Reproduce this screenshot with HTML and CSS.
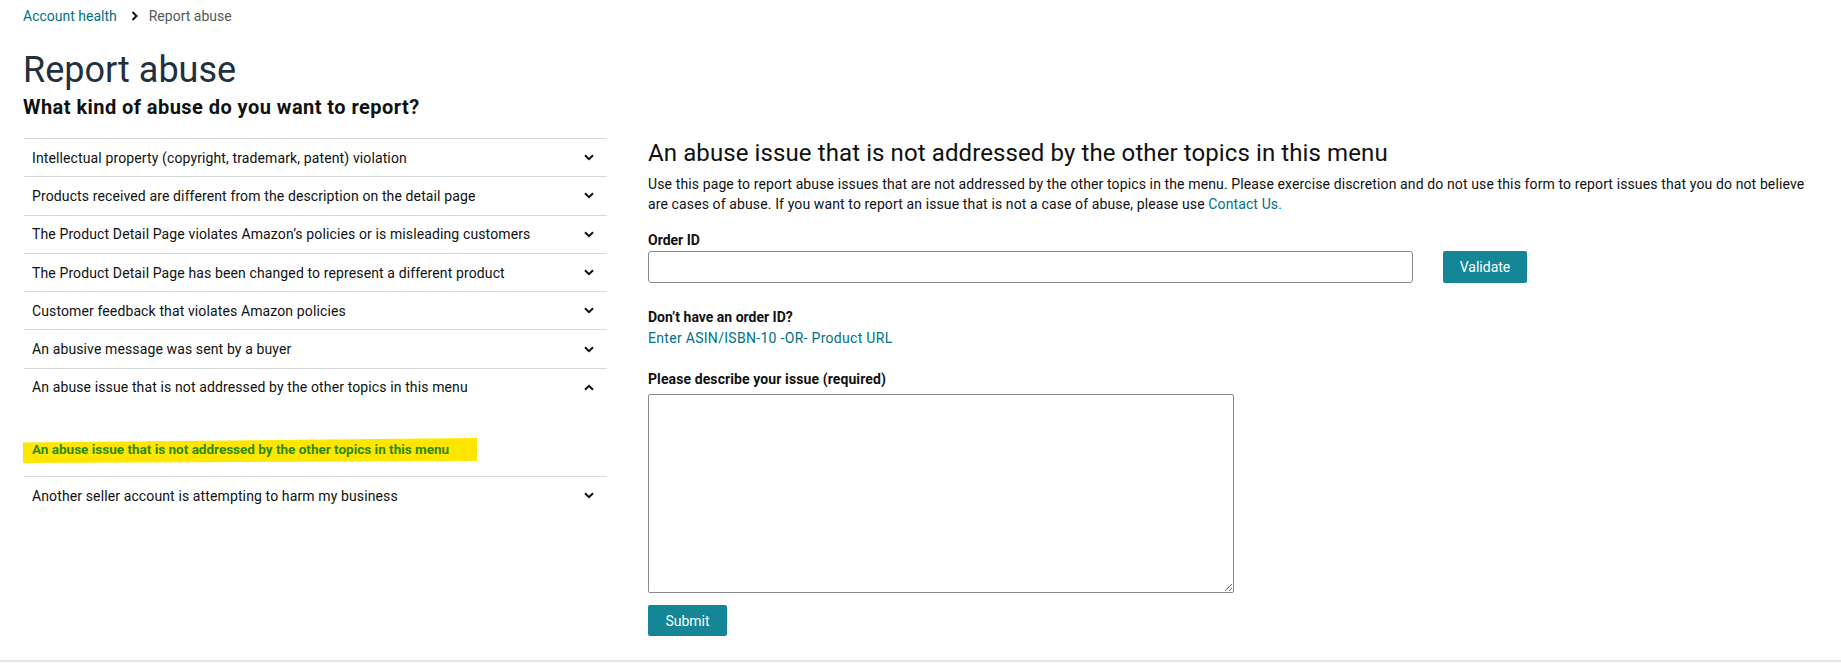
FILE: index.html
```html
<!DOCTYPE html>
<html lang="en">
<head>
<meta charset="utf-8">
<title>Report abuse</title>
<link rel="stylesheet" href="styles.css">
</head>
<body>
<div class="page">
  <nav class="crumbs">
    <a class="crumb-link" href="#">Account health</a>
    <svg class="crumb-sep" width="8" height="10" viewBox="0 0 8 10"><path d="M1.5 1 L5.5 5 L1.5 9" fill="none" stroke="#0f1111" stroke-width="2"/></svg>
    <span class="crumb-current">Report abuse</span>
  </nav>
  <h1 class="title">Report abuse</h1>
  <h2 class="subtitle">What kind of abuse do you want to report?</h2>

  <div class="main">
    <div class="topics">
      <div class="topic"><span>Intellectual property (copyright, trademark, patent) violation</span><svg class="chev" width="10" height="7" viewBox="0 0 10 7"><path d="M1 1.2 L5 5.2 L9 1.2" fill="none" stroke="#0f1111" stroke-width="2"/></svg></div>
      <div class="topic"><span>Products received are different from the description on the detail page</span><svg class="chev" width="10" height="7" viewBox="0 0 10 7"><path d="M1 1.2 L5 5.2 L9 1.2" fill="none" stroke="#0f1111" stroke-width="2"/></svg></div>
      <div class="topic"><span>The Product Detail Page violates Amazon’s policies or is misleading customers</span><svg class="chev" width="10" height="7" viewBox="0 0 10 7"><path d="M1 1.2 L5 5.2 L9 1.2" fill="none" stroke="#0f1111" stroke-width="2"/></svg></div>
      <div class="topic"><span>The Product Detail Page has been changed to represent a different product</span><svg class="chev" width="10" height="7" viewBox="0 0 10 7"><path d="M1 1.2 L5 5.2 L9 1.2" fill="none" stroke="#0f1111" stroke-width="2"/></svg></div>
      <div class="topic"><span>Customer feedback that violates Amazon policies</span><svg class="chev" width="10" height="7" viewBox="0 0 10 7"><path d="M1 1.2 L5 5.2 L9 1.2" fill="none" stroke="#0f1111" stroke-width="2"/></svg></div>
      <div class="topic"><span>An abusive message was sent by a buyer</span><svg class="chev" width="10" height="7" viewBox="0 0 10 7"><path d="M1 1.2 L5 5.2 L9 1.2" fill="none" stroke="#0f1111" stroke-width="2"/></svg></div>
      <div class="topic-group">
        <div class="topic topic-open"><span>An abuse issue that is not addressed by the other topics in this menu</span><svg class="chev" width="10" height="7" viewBox="0 0 10 7"><path d="M1 5.8 L5 1.8 L9 5.8" fill="none" stroke="#0f1111" stroke-width="2"/></svg></div>
        <div class="topic-body">
          <span class="highlight">An abuse issue that is not addressed by the other topics in this menu</span>
        </div>
      </div>
      <div class="topic"><span>Another seller account is attempting to harm my business</span><svg class="chev" width="10" height="7" viewBox="0 0 10 7"><path d="M1 1.2 L5 5.2 L9 1.2" fill="none" stroke="#0f1111" stroke-width="2"/></svg></div>
    </div>

    <div class="detail">
      <h3 class="detail-title">An abuse issue that is not addressed by the other topics in this menu</h3>
      <p class="detail-text">Use this page to report abuse issues that are not addressed by the other topics in the menu. Please exercise discretion and do not use this form to report issues that you do not believe<br>are cases of abuse. If you want to report an issue that is not a case of abuse, please use <a class="link" href="#">Contact Us.</a></p>

      <div class="field-label field-order">Order ID</div>
      <div class="order-row">
        <input class="order-input" type="text">
        <button class="btn btn-validate" type="button">Validate</button>
      </div>

      <div class="field-label field-noorder">Don’t have an order ID?</div>
      <a class="link asin-link" href="#">Enter ASIN/ISBN-10 -OR- Product URL</a>

      <div class="field-label field-describe">Please describe your issue (required)</div>
      <textarea class="describe"></textarea>
      <button class="btn btn-submit" type="button">Submit</button>
    </div>
  </div>
</div>
<div class="footer-line"></div>
</body>
</html>
```

FILE: styles.css
```css
* { box-sizing: border-box; }

body {
  margin: 0;
  font-family: Roboto, "Liberation Sans", Arial, sans-serif;
  color: #0f1111;
  background: #ffffff;
}

.page {
  padding: 0 23px;
}

.crumbs {
  display: flex;
  align-items: center;
  height: 20px;
  margin-top: 6px;
  font-size: 14px;
  line-height: 20px;
}

.crumb-link {
  color: #007185;
  text-decoration: none;
}

.crumb-sep {
  margin: 0 10px 0 14px;
}

.crumb-current {
  color: #565959;
}

.title {
  margin: 22px 0 0;
  font-size: 36px;
  line-height: 44px;
  font-weight: 400;
  color: #232f3e;
}

.subtitle {
  margin: 3px 0 0;
  font-size: 20px;
  line-height: 24px;
  font-weight: 700;
  letter-spacing: 0.45px;
  color: #0f1111;
}

.main {
  display: grid;
  grid-template-columns: 583px 1fr;
  column-gap: 41px;
  margin-top: 19px;
  margin-left: 1px;
}

.topics {
  display: flex;
  flex-direction: column;
}

.topic {
  display: flex;
  align-items: center;
  justify-content: space-between;
  height: 38.3px;
  padding: 0 13px 0 8px;
  border-top: 1px solid #d5d9d9;
  font-size: 14px;
  letter-spacing: 0.12px;
  color: #0f1111;
}

.chev {
  flex: none;
}

.topic-body {
  height: 70px;
  padding-top: 32px;
}

.highlight {
  display: inline-block;
  margin-left: -1px;
  height: 25px;
  padding: 0 28px 0 9px;
  background: #ffe600;
  color: #2b8a12;
  font-size: 13.5px;
  font-weight: 700;
  line-height: 22px;
  clip-path: polygon(0 18%, 100% 0, 100% 92%, 0 100%);
}

.detail {
  display: flex;
  flex-direction: column;
  align-items: flex-start;
}

.detail-title {
  margin: 0;
  font-size: 24px;
  line-height: 30px;
  font-weight: 400;
  letter-spacing: 0.1px;
  color: #0f1111;
}

.detail-text {
  margin: 6px 0 0;
  font-size: 14px;
  line-height: 20px;
  letter-spacing: 0.12px;
  white-space: nowrap;
}

.link {
  color: #007185;
  text-decoration: none;
}

.field-label {
  font-size: 14px;
  line-height: 20px;
  font-weight: 700;
}

.field-order {
  margin-top: 16px;
}

.order-row {
  display: flex;
  align-items: center;
  gap: 30px;
  margin-top: 1px;
}

.order-input {
  width: 765px;
  height: 32px;
  border: 1px solid #888c8c;
  border-radius: 3px;
  font-family: inherit;
  font-size: 14px;
  padding: 0 8px;
}

.btn {
  display: flex;
  align-items: center;
  justify-content: center;
  border: none;
  border-radius: 2px;
  background: #148696;
  color: #ffffff;
  font-family: inherit;
  font-size: 14px;
  padding: 0;
}

.btn-validate {
  width: 84px;
  height: 32px;
}

.field-noorder {
  margin-top: 24px;
}

.asin-link {
  display: block;
  margin-top: 1px;
  font-size: 14px;
  line-height: 20px;
  letter-spacing: 0.3px;
}

.field-describe {
  margin-top: 21px;
  letter-spacing: 0.1px;
}

.describe {
  margin-top: 5px;
  width: 586px;
  height: 199px;
  border: 1px solid #888c8c;
  border-radius: 2px;
  font-family: inherit;
  font-size: 14px;
  resize: both;
}

.btn-submit {
  margin-top: 12px;
  width: 79px;
  height: 31px;
}

.footer-line {
  margin-top: 24px;
  height: 2px;
  background: #e3e6e6;
}
```
